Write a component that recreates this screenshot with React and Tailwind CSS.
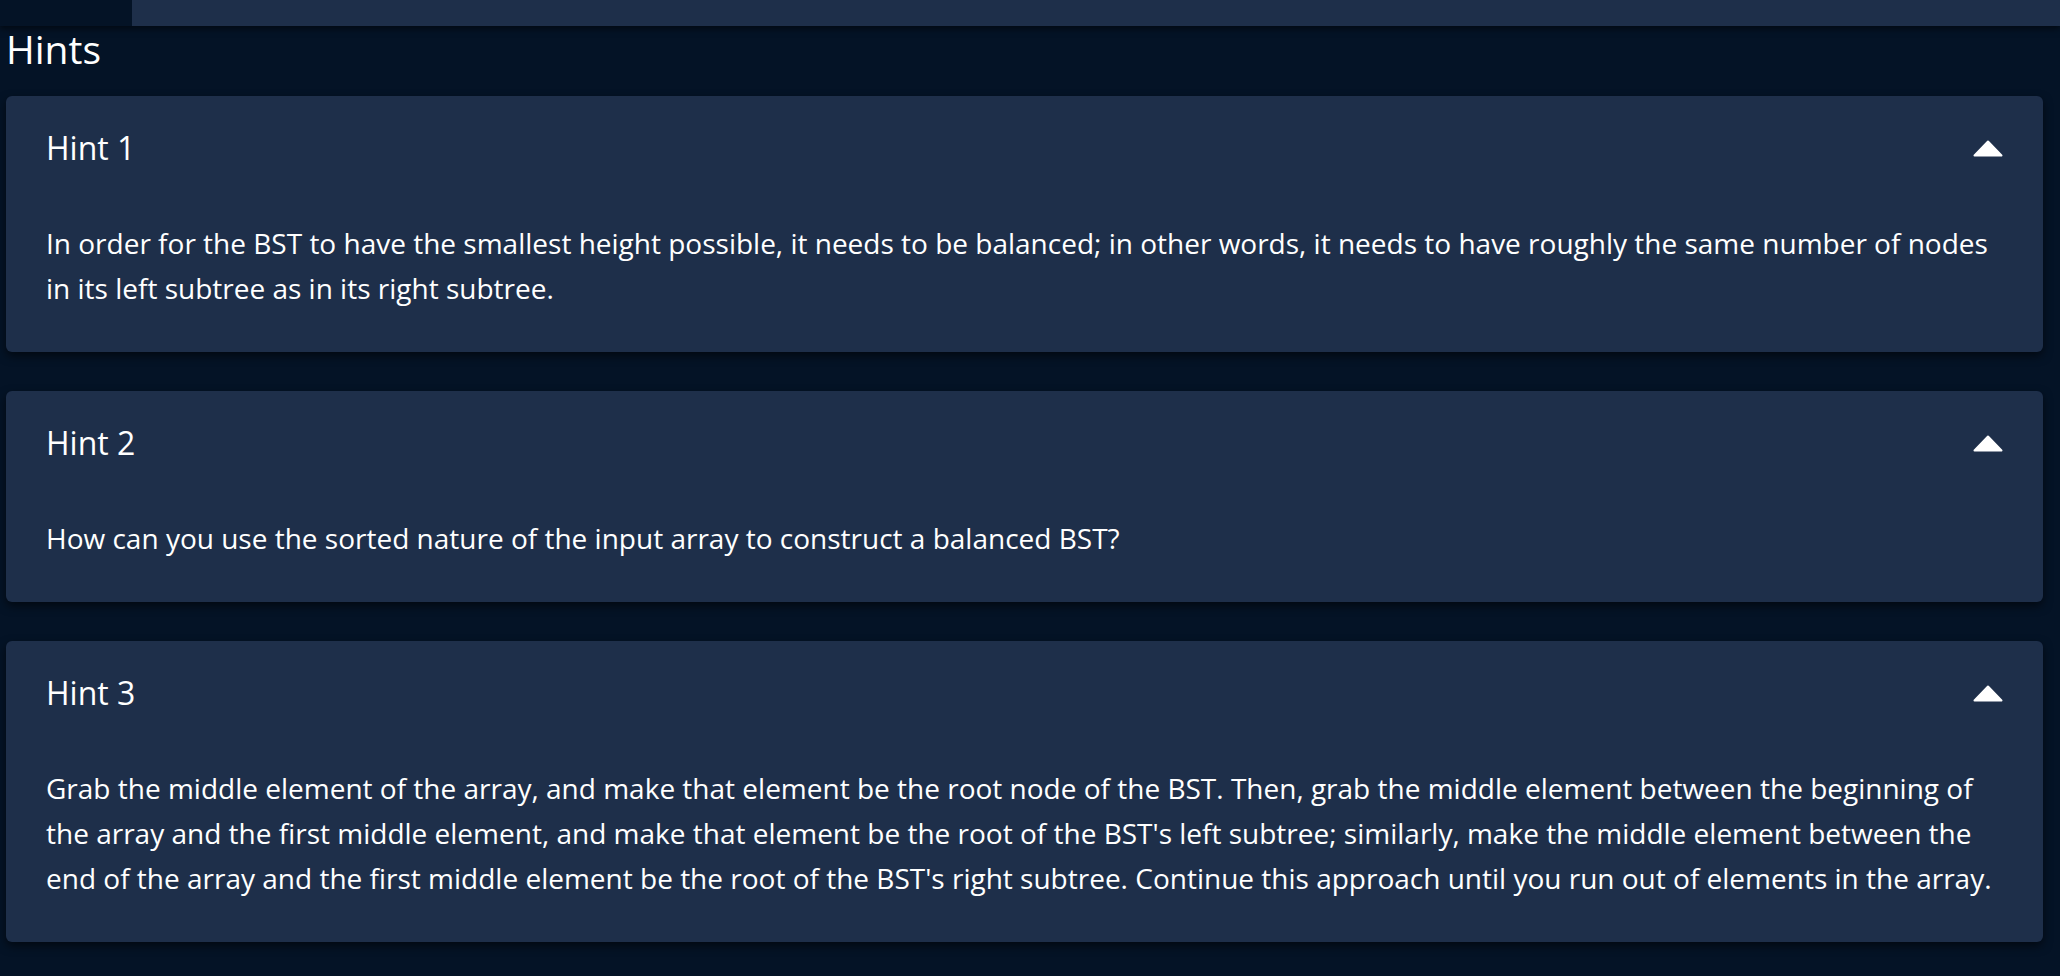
import { useState } from 'react';

const hints = [
  {
    title: 'Hint 1',
    body: "In order for the BST to have the smallest height possible, it needs to be balanced; in other words, it needs to have roughly the same number of nodes in its left subtree as in its right subtree.",
  },
  {
    title: 'Hint 2',
    body: 'How can you use the sorted nature of the input array to construct a balanced BST?',
  },
  {
    title: 'Hint 3',
    body: "Grab the middle element of the array, and make that element be the root node of the BST. Then, grab the middle element between the beginning of the array and the first middle element, and make that element be the root of the BST's left subtree; similarly, make the middle element between the end of the array and the first middle element be the root of the BST's right subtree. Continue this approach until you run out of elements in the array.",
  },
];

const Caret = ({ open }) => (
  <svg width="30" height="17" viewBox="0 0 30 17" className={open ? '' : 'rotate-180'}>
    <path d="M15 1.5 L28.5 15.5 L1.5 15.5 Z" fill="white" stroke="white" strokeWidth="2" strokeLinejoin="round" />
  </svg>
);

const HintCard = ({ hint }) => {
  const [open, setOpen] = useState(true);
  return (
    <div className="bg-[#1e2f4a] rounded-md shadow-[0_4px_10px_rgba(0,0,0,0.55)] px-10 pt-[29px] pb-[41px]">
      <button onClick={() => setOpen(!open)} className="w-full flex justify-between items-center text-left text-[32px] leading-[46px] text-white">
        <span>{hint.title}</span>
        <Caret open={open} />
      </button>
      {open && <p className="mt-[50px] text-[28px] leading-[45px] text-white">{hint.body}</p>}
    </div>
  );
};

export default function App() {
  return (
    <div className="min-h-screen bg-[#041326] font-['Open_Sans',sans-serif]">
      <div className="h-[26px] flex shadow-[0_3px_6px_rgba(0,0,0,0.5)] relative">
        <div className="w-[132px] bg-[#041326]" />
        <div className="flex-1 bg-[#1e2f4a]" />
      </div>
      <div className="pl-[6px] pr-[17px] pb-10">
        <h2 className="text-[39px] leading-[46px] text-white mb-6">Hints</h2>
        <div className="flex flex-col gap-[39px]">
          {hints.map((h) => (
            <HintCard key={h.title} hint={h} />
          ))}
        </div>
      </div>
    </div>
  );
}
